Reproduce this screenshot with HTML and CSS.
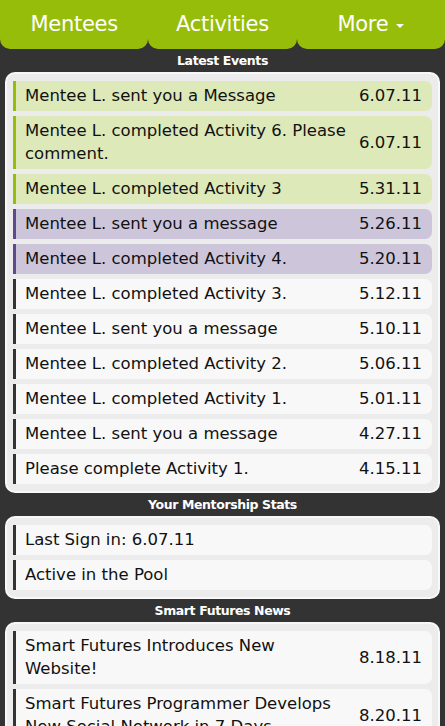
FILE: index.html
```html
<!DOCTYPE html>
<html>
<head>
<meta charset="utf-8">
<link rel="stylesheet" href="styles.css">
</head>
<body>
<nav class="tabs">
  <a class="tab">Mentees</a>
  <a class="tab">Activities</a>
  <a class="tab">More <span class="caret"></span></a>
</nav>

<h2 class="section-title">Latest Events</h2>
<ul class="panel">
  <li class="row green"><span class="text">Mentee L. sent you a Message</span><span class="date">6.07.11</span></li>
  <li class="row green"><span class="text">Mentee L. completed Activity 6. Please comment.</span><span class="date">6.07.11</span></li>
  <li class="row green"><span class="text">Mentee L. completed Activity 3</span><span class="date">5.31.11</span></li>
  <li class="row purple"><span class="text">Mentee L. sent you a message</span><span class="date">5.26.11</span></li>
  <li class="row purple"><span class="text">Mentee L. completed Activity 4.</span><span class="date">5.20.11</span></li>
  <li class="row"><span class="text">Mentee L. completed Activity 3.</span><span class="date">5.12.11</span></li>
  <li class="row"><span class="text">Mentee L. sent you a message</span><span class="date">5.10.11</span></li>
  <li class="row"><span class="text">Mentee L. completed Activity 2.</span><span class="date">5.06.11</span></li>
  <li class="row"><span class="text">Mentee L. completed Activity 1.</span><span class="date">5.01.11</span></li>
  <li class="row"><span class="text">Mentee L. sent you a message</span><span class="date">4.27.11</span></li>
  <li class="row"><span class="text">Please complete Activity 1.</span><span class="date">4.15.11</span></li>
</ul>

<h2 class="section-title">Your Mentorship Stats</h2>
<ul class="panel">
  <li class="row"><span class="text">Last Sign in: 6.07.11</span></li>
  <li class="row"><span class="text">Active in the Pool</span></li>
</ul>

<h2 class="section-title">Smart Futures News</h2>
<ul class="panel">
  <li class="row"><span class="text">Smart Futures Introduces New Website!</span><span class="date">8.18.11</span></li>
  <li class="row"><span class="text">Smart Futures Programmer Develops New Social Network in 7 Days</span><span class="date">8.20.11</span></li>
</ul>
</body>
</html>
```

FILE: styles.css
```css
html, body {
  margin: 0;
  padding: 0;
  background: #333333;
  font-family: "DejaVu Sans", Verdana, sans-serif;
}

.tabs {
  display: flex;
  height: 49px;
}

.tab {
  flex: 1;
  display: flex;
  align-items: center;
  justify-content: center;
  background: #97bd0b;
  color: #ffffff;
  font-size: 21px;
  border-radius: 0 0 10px 10px;
  letter-spacing: -0.3px;
  padding-bottom: 2px;
}

.caret {
  display: inline-block;
  width: 0;
  height: 0;
  margin-left: 8px;
  margin-top: 4px;
  border-left: 4px solid transparent;
  border-right: 4px solid transparent;
  border-top: 4px solid #ffffff;
}

.section-title {
  margin: 0;
  height: 23px;
  line-height: 24px;
  text-align: center;
  color: #ffffff;
  font-size: 12.5px;
  font-weight: bold;
  letter-spacing: -0.4px;
}

.panel {
  list-style: none;
  margin: 0 5px;
  padding: 7px 6px;
  background: #ececec;
  border: 2px solid #f8f8f8;
  border-radius: 10px;
  display: flex;
  flex-direction: column;
  gap: 5px;
}

.row {
  display: flex;
  align-items: center;
  gap: 8px;
  padding: 3px 10px 4px 9px;
  line-height: 23px;
  font-size: 16.5px;
  color: #111111;
  background: #f8f8f8;
  border-left: 3px solid #333333;
  border-radius: 0 7px 7px 0;
}

.row.green {
  background: #dde9b9;
  border-left-color: #97bd0b;
}

.row.purple {
  background: #cdc6db;
  border-left-color: #5c4a8a;
}

.text {
  flex: 1;
}

.date {
  flex: none;
}
```
